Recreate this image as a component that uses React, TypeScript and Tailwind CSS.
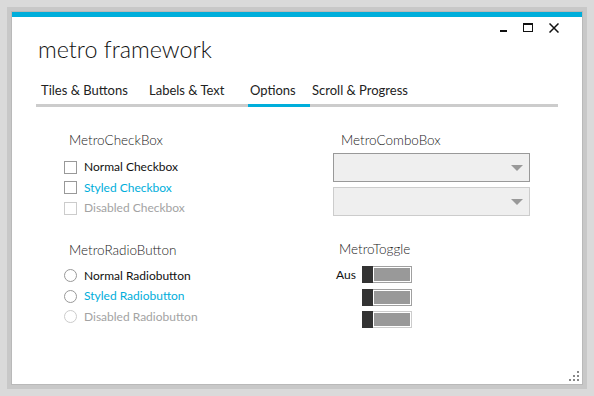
import React from "react";

const F = { fontFamily: "Lato, 'Open Sans', sans-serif" };

function CheckRow({ label, tone }: { label: string; tone: "normal" | "styled" | "disabled" }) {
  const box = tone === "disabled" ? "border-[#cccccc]" : "border-[#999999]";
  const txt =
    tone === "normal" ? "text-[#111111]" : tone === "styled" ? "text-[#00aedb]" : "text-[#a3a3a3]";
  return (
    <div className="flex items-center h-[20.5px]">
      <div className={`w-[13px] h-[13px] border bg-white ${box}`} />
      <span className={`ml-[7px] text-[12px] leading-[16px] ${txt}`}>{label}</span>
    </div>
  );
}

function RadioRow({ label, tone }: { label: string; tone: "normal" | "styled" | "disabled" }) {
  const box = tone === "disabled" ? "border-[#cccccc]" : "border-[#999999]";
  const txt =
    tone === "normal" ? "text-[#111111]" : tone === "styled" ? "text-[#00aedb]" : "text-[#a3a3a3]";
  return (
    <div className="flex items-center h-[20.5px]">
      <div className={`w-[13px] h-[13px] rounded-full border bg-white ${box}`} />
      <span className={`ml-[7px] text-[12px] leading-[16px] ${txt}`}>{label}</span>
    </div>
  );
}

function Combo({ light }: { light?: boolean }) {
  return (
    <div
      className={`w-[197px] h-[29px] border bg-[#efefef] flex items-center justify-end pr-[6px] ${
        light ? "border-[#cccccc]" : "border-[#999999]"
      }`}
    >
      <svg width="12" height="6" viewBox="0 0 12 6">
        <path d="M0 0 H12 L6 6 Z" fill="#999999" />
      </svg>
    </div>
  );
}

function Toggle({ label, light }: { label?: string; light?: boolean }) {
  return (
    <div className="flex items-center h-[17px]">
      <span className="w-[26px] text-[12px] leading-[16px] text-[#111111]">{label ?? ""}</span>
      <div className="flex h-[17px] w-[50px]">
        <div className="w-[11px] h-full bg-[#333333]" />
        <div
          className={`flex-1 border border-l-0 p-[1px] bg-white ${
            light ? "border-[#cccccc]" : "border-[#a0a0a0]"
          }`}
        >
          <div className="w-full h-full bg-[#999999]" />
        </div>
      </div>
    </div>
  );
}

export default function App() {
  return (
    <div className="w-[594px] h-[396px] bg-[#dadada] pt-[7px] pl-[7px]" style={F}>
      <div className="w-[580px] h-[382px] bg-[#c8c8c8] p-[4px]">
        <div className="w-full h-full border border-[#b9b9b9] bg-white flex flex-col relative">
          <div className="h-[5px] bg-[#00aedb] shrink-0" />
          {/* window controls */}
          <div className="flex justify-end items-start mt-[6px] h-[10px] pr-[23px]">
            <svg width="7" height="10" viewBox="0 0 7 10">
              <rect x="0" y="7" width="7" height="2" fill="#111" />
            </svg>
            <svg width="10" height="10" viewBox="0 0 10 10" className="ml-[16px]">
              <rect x="0.5" y="0.5" width="9" height="8" fill="none" stroke="#111" />
              <rect x="0" y="0" width="10" height="2" fill="#111" />
            </svg>
            <svg width="10" height="10" viewBox="0 0 10 10" className="ml-[16px]">
              <path d="M0.5 0.5 L9.5 9.5 M9.5 0.5 L0.5 9.5" stroke="#111" strokeWidth="1.5" />
            </svg>
          </div>
          {/* title */}
          <div className="pl-[26px] text-[23.3px] leading-[32px] font-light text-[#111111]">
            metro framework
          </div>
          {/* tabs */}
          <div className="mx-[24px] mt-[16px] flex border-b-[3px] border-[#cccccc] text-[13px] leading-[18px] text-[#222222]">
            <div className="w-[111px] pl-[5px] pb-[5px]">Tiles &amp; Buttons</div>
            <div className="w-[101px] pl-[2px] pb-[5px]">Labels &amp; Text</div>
            <div className="w-[62px] pl-[2px] pb-[2px] -mb-[3px] border-b-[3px] border-[#00aedb]">
              Options
            </div>
            <div className="pl-[2px] pb-[5px]">Scroll &amp; Progress</div>
          </div>
          {/* content */}
          <div className="flex pl-[52px] mt-[25.4px]">
            <div className="w-[269px] flex flex-col">
              <div className="pl-[5px] text-[13.5px] leading-[16px] font-light text-[#222222]">MetroCheckBox</div>
              <div className="mt-[8.4px] flex flex-col">
                <CheckRow label="Normal Checkbox" tone="normal" />
                <CheckRow label="Styled Checkbox" tone="styled" />
                <CheckRow label="Disabled Checkbox" tone="disabled" />
              </div>
              <div className="mt-[23.6px] pl-[5px] text-[13.5px] leading-[16px] font-light text-[#222222]">
                MetroRadioButton
              </div>
              <div className="mt-[7.4px] flex flex-col">
                <RadioRow label="Normal Radiobutton" tone="normal" />
                <RadioRow label="Styled Radiobutton" tone="styled" />
                <RadioRow label="Disabled Radiobutton" tone="disabled" />
              </div>
            </div>
            <div className="flex flex-col">
              <div className="pl-[8px] text-[13.5px] leading-[16px] font-light text-[#222222]">MetroComboBox</div>
              <div className="mt-[5px] flex flex-col gap-[5px]">
                <Combo />
                <Combo light />
              </div>
              <div className="mt-[25px] pl-[6px] text-[13.5px] leading-[16px] font-light text-[#222222]">
                MetroToggle
              </div>
              <div className="mt-[9px] pl-[3px] flex flex-col gap-[5.5px]">
                <Toggle label="Aus" />
                <Toggle />
                <Toggle light />
              </div>
            </div>
          </div>
          {/* resize grip */}
          <svg width="10" height="10" viewBox="0 0 10 10" className="absolute right-[3px] bottom-[3px]">
            <rect x="8" y="0" width="2" height="2" fill="#888" />
            <rect x="4" y="4" width="2" height="2" fill="#888" />
            <rect x="8" y="4" width="2" height="2" fill="#888" />
            <rect x="0" y="8" width="2" height="2" fill="#888" />
            <rect x="4" y="8" width="2" height="2" fill="#888" />
            <rect x="8" y="8" width="2" height="2" fill="#888" />
          </svg>
        </div>
      </div>
    </div>
  );
}
